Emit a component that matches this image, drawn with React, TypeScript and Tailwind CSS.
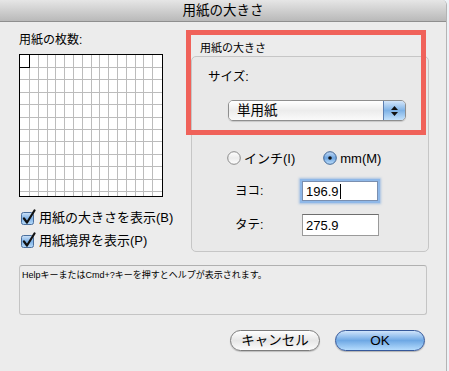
import React from 'react';

const font = "font-['Liberation_Sans','Noto_Sans_CJK_JP',sans-serif]";

function PaperGrid() {
  const cols = Array.from({ length: 15 }, (_, i) => Math.round(10 + 8.8 * i) + 0.5);
  const rows = Array.from({ length: 11 }, (_, j) => Math.round(13 + 12.4 * j) + 0.5);
  return (
    <svg width="144" height="143" className="block bg-white">
      {cols.map((x) => (
        <line key={`c${x}`} x1={x} y1={0} x2={x} y2={143} stroke="#bcbcbc" strokeWidth="1" />
      ))}
      {rows.map((y) => (
        <line key={`r${y}`} x1={0} y1={y} x2={144} y2={y} stroke="#bcbcbc" strokeWidth="1" />
      ))}
      <rect x="0.5" y="0.5" width="10" height="13" fill="none" stroke="#000" strokeWidth="1" />
      <rect x="0.5" y="0.5" width="143" height="142" fill="none" stroke="#000" strokeWidth="1" />
    </svg>
  );
}

function CheckBox({ id }: { id: string }) {
  return (
    <svg width="17" height="17" viewBox="0 0 17 17" className="block">
      <defs>
        <linearGradient id={id} x1="0" y1="0" x2="0" y2="1">
          <stop offset="0" stopColor="#cfe3f8" />
          <stop offset="0.5" stopColor="#7fb2e6" />
          <stop offset="1" stopColor="#b9dcfb" />
        </linearGradient>
      </defs>
      <rect x="1.5" y="3.5" width="12" height="12" rx="2" fill={`url(#${id})`} stroke="#4a6e9c" />
      <path d="M4 9.5 L7 13.5 L14.5 1.5" fill="none" stroke="#111" strokeWidth="2.2" strokeLinecap="round" strokeLinejoin="round" />
    </svg>
  );
}

function Radio({ checked, id }: { checked?: boolean; id: string }) {
  return (
    <svg width="14" height="14" viewBox="0 0 14 14" className="block">
      <defs>
        <linearGradient id={id} x1="0" y1="0" x2="0" y2="1">
          {checked ? (
            <>
              <stop offset="0" stopColor="#c6dcf6" />
              <stop offset="0.5" stopColor="#6ea5e0" />
              <stop offset="1" stopColor="#bfe0fc" />
            </>
          ) : (
            <>
              <stop offset="0" stopColor="#ffffff" />
              <stop offset="0.5" stopColor="#ececec" />
              <stop offset="1" stopColor="#ffffff" />
            </>
          )}
        </linearGradient>
      </defs>
      <circle cx="7" cy="7" r="6.3" fill={`url(#${id})`} stroke={checked ? '#3f6595' : '#8a8a8a'} strokeWidth="1" />
      {checked && <circle cx="7" cy="7" r="1.8" fill="#111" />}
    </svg>
  );
}

function PopupButton() {
  return (
    <div className="flex h-[21px] w-[178px] overflow-hidden rounded-[5px] border border-[#8e8e8e] shadow-[0_1px_1px_rgba(0,0,0,0.15)]">
      <div className="flex flex-1 items-center bg-gradient-to-b from-[#ffffff] via-[#ececec] to-[#fafafa] pl-[8px] text-[13.5px] leading-none">
        単用紙
      </div>
      <div className="flex w-[22px] flex-col items-center justify-center gap-[2px] border-l border-[#5d7fb0] bg-gradient-to-b from-[#d4e6f9] via-[#7eb2e6] to-[#c4e2fc]">
        <svg width="7" height="4" viewBox="0 0 7 4"><path d="M3.5 0 L7 4 L0 4 Z" fill="#111" /></svg>
        <svg width="7" height="4" viewBox="0 0 7 4"><path d="M0 0 L7 0 L3.5 4 Z" fill="#111" /></svg>
      </div>
    </div>
  );
}

export default function App() {
  return (
    <div className={`h-[371px] w-[449px] overflow-hidden bg-[#eef2f7] text-black ${font}`}>
      <div className="relative h-[371px] w-[447px] rounded-tr-[5px] border-r border-[#b4b4b4] bg-[#ececec]">
        {/* title bar */}
        <div className="flex h-[22px] items-center justify-center rounded-tr-[5px] border-b border-[#8f8f8f] bg-gradient-to-b from-[#e6e6e6] to-[#b9b9b9] text-[13.5px] leading-none">
          用紙の大きさ
        </div>

        <div className="flex">
          {/* left column */}
          <div className="ml-[19px] w-[152px] shrink-0 pt-[10px]">
            <p className="text-[12px] leading-[16px]">用紙の枚数:</p>
            <div className="mt-[6px]">
              <PaperGrid />
            </div>
            <div className="mt-[12px] flex h-[16px] items-center whitespace-nowrap">
              <div className="ml-[1px]"><CheckBox id="cb1" /></div>
              <span className="ml-[2px] text-[13px] leading-none">用紙の大きさを表示(B)</span>
            </div>
            <div className="mt-[7px] flex h-[16px] items-center whitespace-nowrap">
              <div className="ml-[1px]"><CheckBox id="cb2" /></div>
              <span className="ml-[2px] text-[13px] leading-none">用紙境界を表示(P)</span>
            </div>
          </div>

          {/* right column */}
          <div className="ml-[20px] w-[238px] shrink-0 pt-[19px]">
            <p className="pl-[9px] text-[11px] leading-[14px]">用紙の大きさ</p>
            <div className="mt-[1px] h-[196px] rounded-[5px] border border-[#c6c6c6] bg-[#e9e9e9] pl-[16px] pt-[12px]">
              <p className="text-[12.5px] leading-[16px]">サイズ:</p>
              <div className="ml-[20px] mt-[15px]">
                <PopupButton />
              </div>
              <div className="ml-[19px] mt-[29px] flex h-[16px] items-center whitespace-nowrap text-[13px] leading-none">
                <Radio id="r1" />
                <span className="ml-[3px]">インチ(I)</span>
                <div className="ml-[28px]"><Radio id="r2" checked /></div>
                <span className="ml-[3px]">mm(M)</span>
              </div>
              <div className="mt-[14px] flex h-[22px] items-center text-[12.5px]">
                <span className="ml-[27px] w-[67px]">ヨコ:</span>
                <div className="flex h-[20px] w-[76px] items-center border border-[#7a8fb0] bg-white pl-[3px] text-[13px] leading-none shadow-[0_0_0_2px_#8fb8e8,0_0_2px_3px_rgba(120,165,220,0.6)]">
                  196.9<span className="ml-[1px] inline-block h-[15px] w-px bg-black" />
                </div>
              </div>
              <div className="mt-[12px] flex h-[22px] items-center text-[12.5px]">
                <span className="ml-[27px] w-[67px]">タテ:</span>
                <div className="flex h-[22px] w-[77px] items-center border border-[#9a9a9a] border-t-[#6e6e6e] bg-white pl-[3px] text-[13px] leading-none">
                  275.9
                </div>
              </div>
            </div>
          </div>
        </div>

        {/* help box */}
        <div className="ml-[19px] mt-[13px] h-[50px] w-[408px] rounded-[3px] border border-[#c4c4c4] border-t-[#b0b0b0] bg-[#ececec] pl-[2px] pt-[4px] text-[9px] leading-[11px]">
          HelpキーまたはCmd+?キーを押すとヘルプが表示されます。
        </div>

        {/* buttons */}
        <div className="mt-[15px] flex justify-end gap-[15px] pr-[21px]">
          <button className="flex h-[21px] w-[90px] items-center justify-center rounded-full border border-[#7c7c7c] bg-gradient-to-b from-[#ffffff] via-[#e6e6e6] to-[#fbfbfb] text-[13.5px] leading-none shadow-[0_1px_1px_rgba(0,0,0,0.2)]">
            キャンセル
          </button>
          <button className="flex h-[21px] w-[90px] items-center justify-center rounded-full border border-[#35589a] bg-gradient-to-b from-[#cfe4fb] via-[#6ea8e4] to-[#b5dcfd] text-[13.5px] leading-none shadow-[0_1px_1px_rgba(0,0,0,0.25)]">
            OK
          </button>
        </div>

        {/* red annotation frame */}
        <div className="pointer-events-none absolute left-[186px] top-[30px] h-[105px] w-[240px] border-[5px] border-[#f0625a]" />
      </div>
    </div>
  );
}
